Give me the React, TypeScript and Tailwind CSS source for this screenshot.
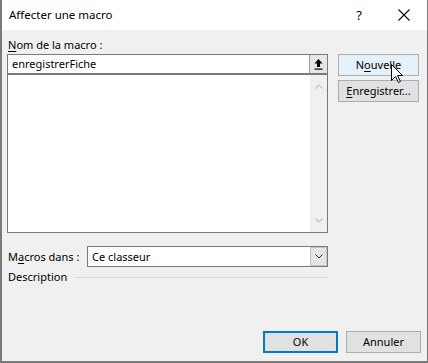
import React from 'react';

function Mn({ children }: { children: React.ReactNode }) {
  return <span className="underline underline-offset-[2px] decoration-[1px]">{children}</span>;
}

function Btn({
  children,
  className = '',
}: {
  children: React.ReactNode;
  className?: string;
}) {
  return (
    <div
      className={`flex h-[22px] w-[81px] items-center justify-center border border-[#adadad] bg-[#e1e1e1] ${className}`}
    >
      {children}
    </div>
  );
}

export default function App() {
  return (
    <div className="relative flex h-[363px] w-[428px] flex-col border-b-2 border-l-2 border-r border-[#7a7a7a] bg-[#f0f0f0] font-['Segoe_UI','Noto_Sans',sans-serif] text-[11px] leading-[16px] text-black">
      {/* title bar */}
      <div className="flex h-[30px] shrink-0 items-center bg-white">
        <span className="pl-[7px] text-[11.5px]">Affecter une macro</span>
        <span className="ml-auto mr-[36px] text-[13px]">?</span>
        <svg width="12" height="12" viewBox="0 0 12 12" className="mr-[17px]">
          <path d="M0.5 0.5 L11.5 11.5 M11.5 0.5 L0.5 11.5" stroke="#000" strokeWidth="1.1" />
        </svg>
      </div>

      <div className="flex flex-1 flex-col px-[5px] pb-[8px]">
        <div className="flex gap-[10px]">
          {/* left column */}
          <div className="flex w-[321px] flex-col">
            <div className="mt-[7px] mb-[1px] pl-[1px]">
              <Mn>N</Mn>om de la macro :
            </div>
            <div className="flex h-[20px] border border-[#7a7a7a] bg-white">
              <span className="flex-1 pl-[4px] leading-[18px]">enregistrerFiche</span>
              <div className="flex w-[18px] items-center justify-center border-l border-[#a0a0a0] bg-[#e6e6e6]">
                <svg width="9" height="11" viewBox="0 0 9 11">
                  <path d="M4.5 0 L8.5 4.5 H6 V8 H3 V4.5 H0.5 Z" fill="#000" />
                  <rect x="0.5" y="9.5" width="8" height="1.2" fill="#000" />
                </svg>
              </div>
            </div>
            <div className="flex h-[159px] border border-[#7a7a7a] bg-white">
              <div className="flex-1" />
              <div className="flex w-[17px] flex-col items-center justify-between bg-[#f0f0f0] py-[9px]">
                <svg width="8" height="5" viewBox="0 0 8 5">
                  <path d="M0.5 4.5 L4 1 L7.5 4.5" stroke="#c2c2c2" strokeWidth="1.2" fill="none" />
                </svg>
                <svg width="8" height="5" viewBox="0 0 8 5">
                  <path d="M0.5 0.5 L4 4 L7.5 0.5" stroke="#c2c2c2" strokeWidth="1.2" fill="none" />
                </svg>
              </div>
            </div>

            <div className="mt-[13px] flex items-center">
              <span className="w-[80px] pl-[1px]">
                M<Mn>a</Mn>cros dans :
              </span>
              <div className="flex h-[21px] flex-1 border border-[#7a7a7a] bg-white">
                <span className="flex-1 pl-[4px] leading-[19px]">Ce classeur</span>
                <div className="flex w-[17px] items-center justify-center border border-[#c4c4c4] bg-[#e5e5e5]">
                  <svg width="8" height="5" viewBox="0 0 8 5">
                    <path d="M0.5 0.5 L4 4 L7.5 0.5" stroke="#333" strokeWidth="1" fill="none" />
                  </svg>
                </div>
              </div>
            </div>

            <div className="mt-[2px] flex items-center gap-[7px] pl-[1px]">
              <span>Description</span>
              <div className="h-px flex-1 bg-[#dcdcdc]" />
            </div>
          </div>

          {/* right column */}
          <div className="flex flex-col gap-[4px] pt-[24px]">
            <Btn className="border-[#0078d7] bg-[#e5f1fb]">
              <span>
                N<Mn>o</Mn>uvelle
              </span>
            </Btn>
            <Btn>
              <span>
                <Mn>E</Mn>nregistrer...
              </span>
            </Btn>
          </div>
        </div>

        <div className="mt-auto flex justify-end gap-[8px] pr-[1px]">
          <div className="flex h-[22px] w-[75px] items-center justify-center border-2 border-[#0078d7] bg-[#e1e1e1]">
            OK
          </div>
          <div className="flex h-[22px] w-[75px] items-center justify-center border border-[#adadad] bg-[#e1e1e1]">
            Annuler
          </div>
        </div>
      </div>

      {/* mouse cursor */}
      <svg
        width="13"
        height="20"
        viewBox="0 0 13 20"
        className="absolute left-[389px] top-[64px]"
      >
        <path
          d="M0.5 0.5 V16.5 L4.5 12.5 L7.5 18.5 L9.5 17.5 L6.5 11.5 H11.5 Z"
          fill="#fff"
          stroke="#000"
          strokeWidth="1"
          strokeLinejoin="miter"
        />
      </svg>
    </div>
  );
}
